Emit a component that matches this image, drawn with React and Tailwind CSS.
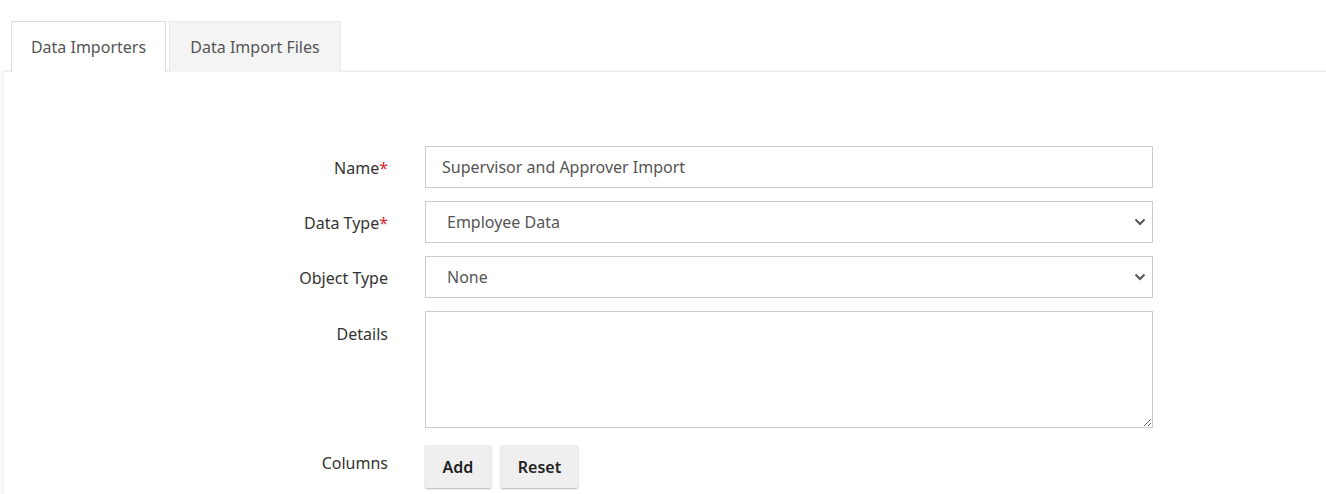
import React, { useState } from 'react';

function Chevron() {
  return (
    <svg className="pointer-events-none absolute right-[7px] top-1/2 -translate-y-1/2" width="12" height="8" viewBox="0 0 12 8">
      <path d="M1.5 1.5 L6 6 L10.5 1.5" fill="none" stroke="#555" strokeWidth="2" />
    </svg>
  );
}

function Row({ label, required, children, top }) {
  return (
    <div className="flex gap-[37px]">
      <div className={"w-[384px] shrink-0 text-right text-[16px] text-[#333] " + (top ? 'pt-[11px]' : 'pt-[10px]')}>
        {label}
        {required && <span className="text-[#d9262c]">*</span>}
      </div>
      <div className="w-[728px]">{children}</div>
    </div>
  );
}

function App() {
  const [tab, setTab] = useState(0);
  const [name, setName] = useState('Supervisor and Approver Import');
  const [dataType, setDataType] = useState('Employee Data');
  const [objectType, setObjectType] = useState('None');

  return (
    <div className="min-h-screen bg-white pt-[21px]" style={{ fontFamily: '"Noto Sans", "Open Sans", sans-serif' }}>
      <div className="flex gap-[3px] pl-[11px]">
        <button
          onClick={() => setTab(0)}
          className="relative z-10 h-[51px] w-[155px] border border-b-0 border-[#ddd] bg-white text-[16px] text-[#555]"
        >
          Data Importers
        </button>
        <button
          onClick={() => setTab(1)}
          className="h-[51px] w-[172px] border border-b-0 border-[#e8e8e8] bg-[#f4f4f4] text-[16px] text-[#555]"
        >
          Data Import Files
        </button>
      </div>
      <div className="-mt-px ml-[4px] border-t border-[#ececec] bg-white pt-[74px] pb-[20px] shadow-[-2px_0_4px_rgba(0,0,0,0.06)]">
        <div className="flex flex-col gap-[13px]">
          <Row label="Name" required>
            <input
              value={name}
              onChange={(e) => setName(e.target.value)}
              className="h-[42px] w-full border border-[#ccc] px-[16px] text-[16px] text-[#555] focus:outline-none"
            />
          </Row>
          <Row label="Data Type" required>
            <div className="relative">
              <select
                value={dataType}
                onChange={(e) => setDataType(e.target.value)}
                className="h-[42px] w-full appearance-none border border-[#ccc] bg-white px-[21px] text-[16px] text-[#555] focus:outline-none"
              >
                <option>Employee Data</option>
              </select>
              <Chevron />
            </div>
          </Row>
          <Row label="Object Type">
            <div className="relative">
              <select
                value={objectType}
                onChange={(e) => setObjectType(e.target.value)}
                className="h-[42px] w-full appearance-none border border-[#ccc] bg-white px-[21px] text-[16px] text-[#555] focus:outline-none"
              >
                <option>None</option>
              </select>
              <Chevron />
            </div>
          </Row>
          <Row label="Details" top>
            <textarea className="block h-[117px] w-full border border-[#ccc] px-[16px] py-[8px] text-[16px] text-[#555] focus:outline-none" />
          </Row>
          <Row label="Columns">
            <div className="flex gap-[10px] pt-[4px]">
              <button className="h-[43px] w-[66px] rounded-[2px] bg-[#efefef] text-[16px] font-semibold text-[#222] shadow-[0_1px_2px_rgba(0,0,0,0.3)]">
                Add
              </button>
              <button className="h-[43px] w-[77px] rounded-[2px] bg-[#efefef] text-[16px] font-semibold text-[#222] shadow-[0_1px_2px_rgba(0,0,0,0.3)]">
                Reset
              </button>
            </div>
          </Row>
        </div>
      </div>
    </div>
  );
}

export default App;
